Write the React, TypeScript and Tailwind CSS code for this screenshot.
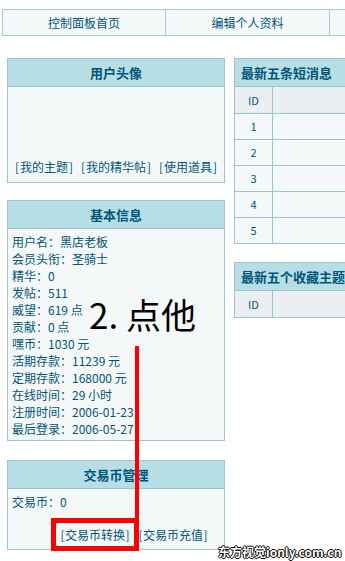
import React from "react";

const font = "font-['SimSun','Noto_Sans_CJK_SC',sans-serif]";

// bracketed link, brackets get SimSun-like half-width cells
const Bk = ({ text, w = "w-[6px]" }: { text: string; w?: string }) => (
  <span className="inline-flex">
    <span className={`inline-block ${w} text-center`}>[</span>
    {text}
    <span className={`inline-block ${w} text-center`}>]</span>
  </span>
);

const Panel = ({
  title,
  className = "",
  children,
}: {
  title: string;
  className?: string;
  children: React.ReactNode;
}) => (
  <div className={`border border-[#9cc4d0] bg-[#f5f8f8] ${className}`}>
    <div className="h-[28px] flex items-center justify-center bg-[#b6dee4] border-b border-[#9cc4d0] text-[13px] font-bold text-[#00557a]">
      {title}
    </div>
    {children}
  </div>
);

const TablePanel = ({
  title,
  rows,
  className = "",
}: {
  title: string;
  rows: string[];
  className?: string;
}) => (
  <div className={`border border-[#9cc4d0] bg-[#f5f8f8] ${className}`}>
    <div className="h-[28px] flex items-center pl-[6px] bg-[#b6dee4] border-b border-[#9cc4d0] text-[13px] font-bold text-[#00557a]">
      {title}
    </div>
    <div className="flex h-[26px] bg-[#eceff1]">
      <div className="w-[38px] flex items-center justify-center border-r border-[#9cc4d0] text-[11px]">
        ID
      </div>
      <div className="flex-1" />
    </div>
    {rows.map((r) => (
      <div key={r} className="flex h-[26px] border-t border-[#9cc4d0]">
        <div className="w-[38px] flex items-center justify-center border-r border-[#9cc4d0] text-[11px]">
          {r}
        </div>
        <div className="flex-1" />
      </div>
    ))}
  </div>
);

const info = [
  "用户名：黑店老板",
  "会员头衔：圣骑士",
  "精华：0",
  "发帖：511",
  "威望：619 点",
  "贡献：0 点",
  "嘿币：1030 元",
  "活期存款：11239 元",
  "定期存款：168000 元",
  "在线时间：29 小时",
  "注册时间：2006-01-23",
  "最后登录：2006-05-27",
];

export default function App() {
  return (
    <div
      className={`relative w-[345px] h-[561px] overflow-hidden bg-white text-[12px] text-[#00557a] ${font}`}
    >
      {/* top nav */}
      <div className="mt-[9px] ml-[2px] w-[500px] flex h-[27px] border border-[#a8c8d4] bg-[#f5f8f8] text-[12px]">
        <div className="w-[163px] flex items-center justify-center border-r border-[#a8c8d4]">
          控制面板首页
        </div>
        <div className="w-[164px] flex items-center justify-center border-r border-[#a8c8d4]">
          编辑个人资料
        </div>
        <div className="flex-1" />
      </div>

      <div className="flex mt-[22px] ml-[7px] w-[500px]">
        {/* left column */}
        <div className="w-[218px] shrink-0">
          <Panel title="用户头像" className="h-[125px] flex flex-col">
            <div className="flex-1 flex items-end justify-center gap-[6px] pb-[6px]">
              <Bk text="我的主题" />
              <Bk text="我的精华帖" />
              <Bk text="使用道具" />
            </div>
          </Panel>

          <Panel title="基本信息" className="mt-[17px]">
            <div className="pt-[4px] pb-[3px] pl-[4px] leading-[17px] whitespace-pre">
              {info.map((l) => (
                <div key={l}>{l}</div>
              ))}
            </div>
          </Panel>

          <Panel title="交易币管理" className="mt-[19px] h-[90px]">
            <div className="pt-[4px] pl-[4px] leading-[17px]">交易币：0</div>
            <div className="mt-[16px] flex justify-end gap-[8px] pr-[16px] leading-[17px]">
              <Bk text="交易币转换" w="w-[5px]" />
              <Bk text="交易币充值" w="w-[5px]" />
            </div>
          </Panel>
        </div>

        {/* right column */}
        <div className="ml-[9px] w-[260px] shrink-0">
          <TablePanel title="最新五条短消息" rows={["1", "2", "3", "4", "5"]} />
          <TablePanel title="最新五个收藏主题" rows={[]} className="mt-[18px]" />
        </div>
      </div>

      {/* annotation overlay */}
      <div className="absolute left-[89px] top-[294px] text-[35px] leading-[40px] text-black font-['Noto_Sans_CJK_SC',sans-serif] whitespace-pre">
        2. 点他
      </div>
      <div className="absolute left-[135px] top-[346px] w-[4px] h-[174px] bg-[#ff0000]" />
      <div className="absolute left-[51px] top-[518px] w-[88px] h-[33px] border-[5px] border-[#ff0000]" />

      {/* watermark */}
      <div className="absolute left-[218px] top-[543px] text-[12px] font-bold text-white whitespace-pre font-['Noto_Sans_CJK_SC',sans-serif] [text-shadow:1px_0_0_#000,-1px_0_0_#000,0_1px_0_#000,0_-1px_0_#000]">
        东方视觉ionly.com.cn
      </div>
    </div>
  );
}
